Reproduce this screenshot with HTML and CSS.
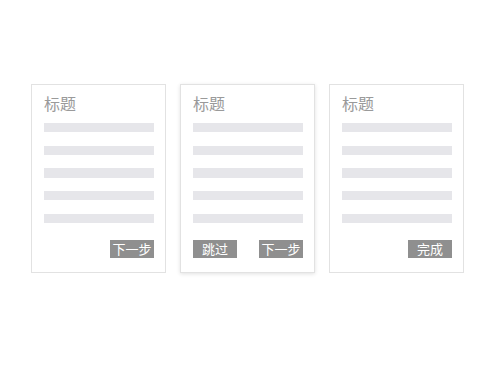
FILE: index.html
```html
<!DOCTYPE html>
<html lang="zh-CN">
<head>
    <meta charset="UTF-8">
    <meta name="viewport" content="width=device-width, initial-scale=1.0">
    <title>引导步骤</title>
    <link rel="stylesheet" href="styles.css">
</head>
<body>
    <div class="steps">
        <div class="card">
            <h3 class="card-title">标题</h3>
            <div class="lines">
                <div class="line"></div>
                <div class="line"></div>
                <div class="line"></div>
                <div class="line"></div>
                <div class="line"></div>
            </div>
            <div class="actions">
                <button class="btn">下一步</button>
            </div>
        </div>
        <div class="card active">
            <h3 class="card-title">标题</h3>
            <div class="lines">
                <div class="line"></div>
                <div class="line"></div>
                <div class="line"></div>
                <div class="line"></div>
                <div class="line"></div>
            </div>
            <div class="actions split">
                <button class="btn">跳过</button>
                <button class="btn">下一步</button>
            </div>
        </div>
        <div class="card">
            <h3 class="card-title">标题</h3>
            <div class="lines">
                <div class="line"></div>
                <div class="line"></div>
                <div class="line"></div>
                <div class="line"></div>
                <div class="line"></div>
            </div>
            <div class="actions">
                <button class="btn">完成</button>
            </div>
        </div>
    </div>
</body>
</html>
```
FILE: styles.css
```css
* {
    margin: 0;
    padding: 0;
    box-sizing: border-box;
}
body {
    font-family: "Noto Sans CJK SC", "Noto Sans", sans-serif;
    background-color: #ffffff;
    width: 500px;
    height: 375px;
}
.steps {
    display: flex;
    gap: 14px;
    padding: 84px 0 0 31px;
}
.card {
    width: 135px;
    height: 189px;
    border: 1px solid #e2e2e2;
    background-color: #ffffff;
    padding: 9px 11px 0 12px;
    display: flex;
    flex-direction: column;
}
.card.active {
    box-shadow: 0 1px 4px rgba(0, 0, 0, 0.12);
}
.card-title {
    font-size: 16px;
    line-height: 18px;
    font-weight: normal;
    color: #9a9a9a;
    margin-bottom: 11px;
}
.lines {
    display: flex;
    flex-direction: column;
    gap: 13.3px;
}
.line {
    height: 9.4px;
    background-color: #e6e6ea;
}
.actions {
    display: flex;
    justify-content: flex-end;
    margin-top: 16.6px;
}
.actions.split {
    justify-content: space-between;
}
.btn {
    width: 44px;
    height: 18px;
    border: none;
    background-color: #8f8f8f;
    color: #ffffff;
    font-family: "Noto Sans CJK SC", sans-serif;
    font-size: 13px;
    line-height: 18px;
}
```
